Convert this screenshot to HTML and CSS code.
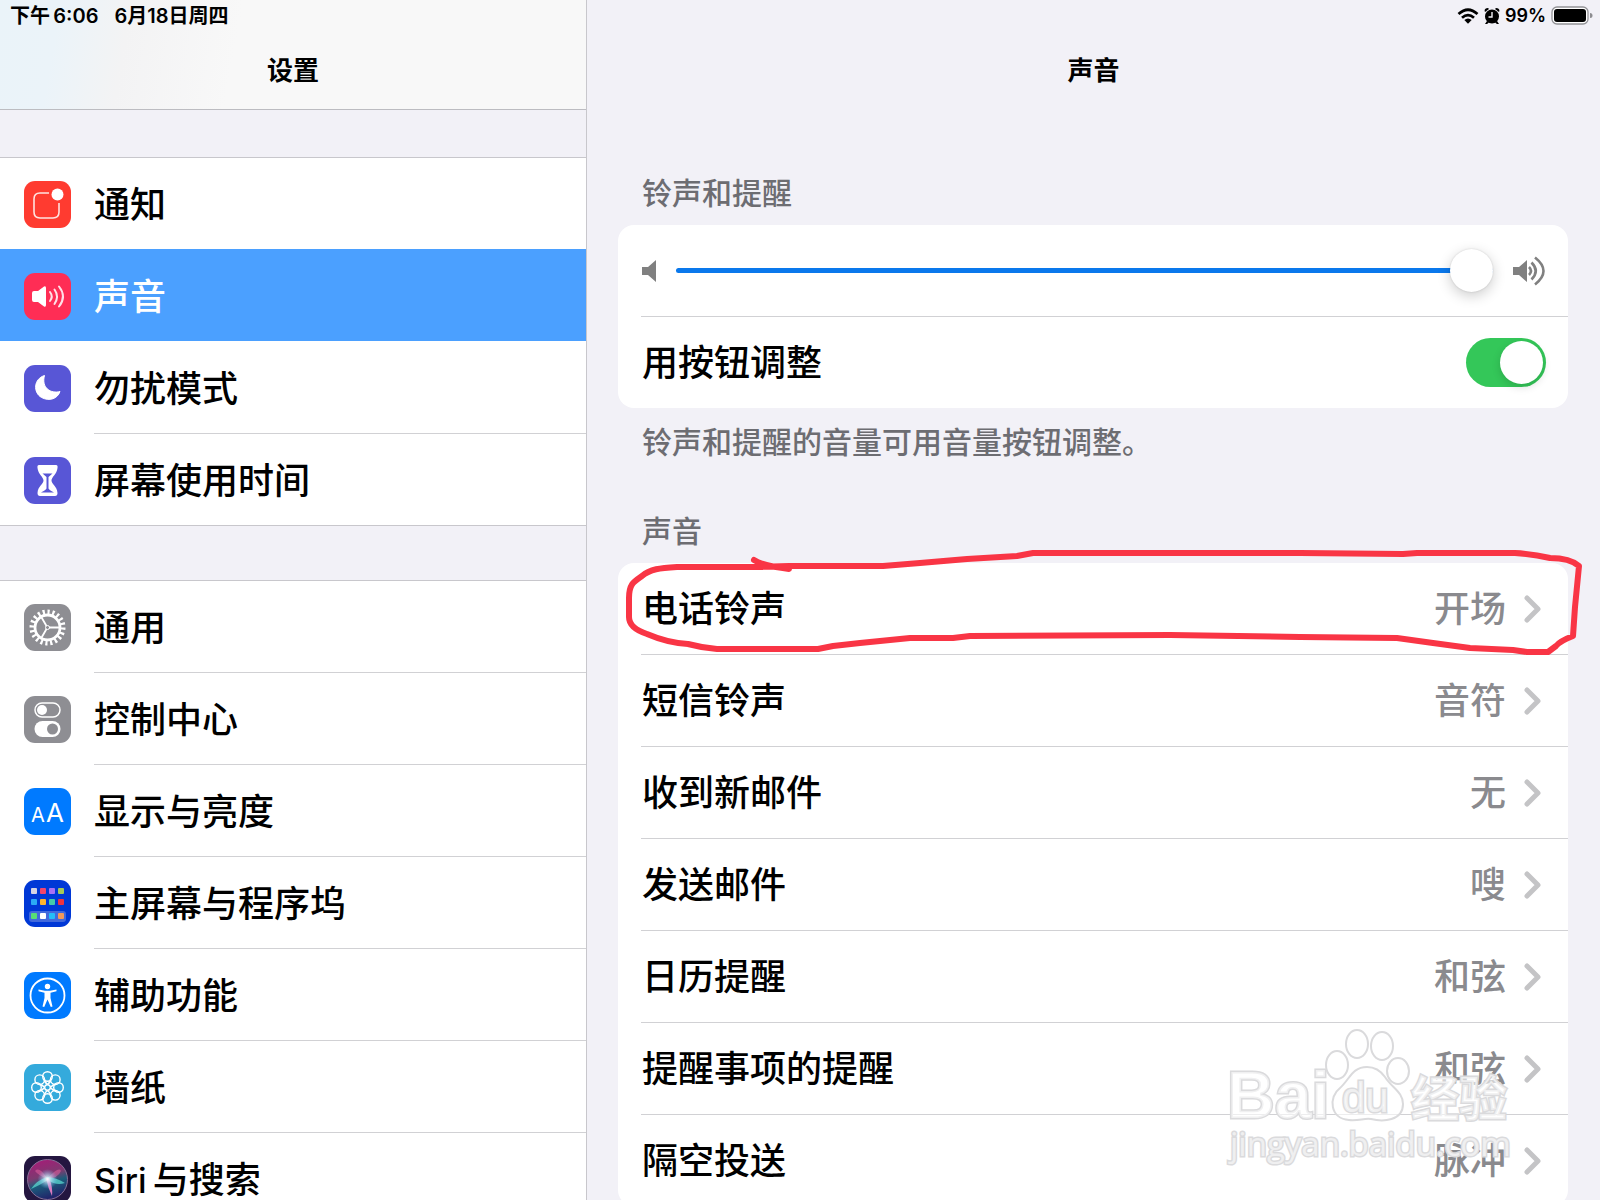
FILE: index.html
```html
<!DOCTYPE html>
<html lang="zh-CN">
  <head>
    <meta charset="UTF-8" />
    <meta name="viewport" content="width=device-width, initial-scale=1.0" />
    <title>设置 - 声音</title>
    <link rel="stylesheet" href="styles.css" />
  </head>
  <body>
    <div class="app">
      <aside class="sidebar">
        <header class="topbar topbar-left">
          <div class="status">
            <span>下午&thinsp;6:06</span>
            <span>6月18日周四</span>
          </div>
          <h1>设置</h1>
        </header>

        <nav class="menu">
          <div class="menu-group">
            <a href="#" class="item">
              <svg class="icon red" viewBox="0 0 47 47">
                <path d="M25 12H16Q10 12 10 18V31Q10 37 16 37H29Q35 37 35 31V22" fill="none" stroke="#ffe3e0" stroke-width="1.6" />
                <circle cx="33.5" cy="13.5" r="6" fill="#fff" />
              </svg>
              <span class="item-label">通知</span>
            </a>
            <a href="#" class="item active" aria-current="page">
              <svg class="icon pink" viewBox="0 0 47 47">
                <path d="M8 20Q8 18 10 18H14L20 13.500Q22 12.500 22 15V32Q22 34.500 20 33.500L14 29H10Q8 29 8 27Z" fill="#fff" />
                <path d="M26 19Q29.500 23.500 26 28M30.500 16.500Q35.500 23.500 30.500 31M35 13.500Q43 23.500 35 33.500" fill="none" stroke="#ffe0e7" stroke-width="2" stroke-linecap="round" />
              </svg>
              <span class="item-label">声音</span>
            </a>
            <a href="#" class="item">
              <svg class="icon purple" viewBox="0 0 47 47">
                <path d="M20.500 10.500C9.500 14 9 27.500 17.500 32.500C25 36.500 33.500 34 36 26.500C27 29 17 23 20.500 10.500Z" fill="#fff" stroke="#fff" stroke-linejoin="round" />
              </svg>
              <span class="item-label">勿扰模式</span>
            </a>
            <a href="#" class="item">
              <svg class="icon purple" viewBox="0 0 47 47">
                <path d="M15 8H32Q34 8 33.500 11C33 17 27.500 20 27.500 23.500C27.500 27 33 29 33.500 36Q33.500 39 31 39H16Q13.500 39 13.500 36C14 29 19.500 27 19.500 23.500C19.500 20 14 17 13.500 11Q13 8 15 8Z" fill="#fff" />
                <path d="M18.500 16.500H28.500L24.500 20V31.500Q25 33 30 35.500H17Q22 33 22.500 31.500V20Z" fill="#5856d6" />
              </svg>
              <span class="item-label">屏幕使用时间</span>
            </a>
          </div>

          <div class="menu-group">
            <a href="#" class="item">
              <svg class="icon gray" viewBox="0 0 47 47" fill="none" stroke="#fff">
                <circle cx="23.500" cy="23.500" r="12.500" stroke-width="2.800" />
                <circle cx="23.500" cy="23.500" r="15.500" pathLength="80" stroke-width="5" stroke-dasharray="1.800 2.200" />
                <circle cx="23.500" cy="23.500" r="2" stroke-width="1" />
                <path d="M25 23.500H36M22.500 22L17 12.500M22.500 25L17 34.500" stroke-width="1.800" />
              </svg>
              <span class="item-label">通用</span>
            </a>
            <a href="#" class="item">
              <svg class="icon gray" viewBox="0 0 47 47">
                <rect x="11" y="7" width="25" height="14" rx="7" fill="none" stroke="#fff" stroke-width="1.500" />
                <circle cx="18" cy="14" r="5" fill="#fff" />
                <rect x="10.500" y="25" width="26" height="16" rx="8" fill="#fff" />
                <circle cx="28.500" cy="33" r="5.500" fill="#8e8e93" />
              </svg>
              <span class="item-label">控制中心</span>
            </a>
            <a href="#" class="item">
              <svg class="icon blue" viewBox="0 0 47 47" fill="#fff" font-family="Inter, sans-serif" font-weight="400">
                <text x="7" y="34" font-size="20">A</text>
                <text x="22" y="34" font-size="26">A</text>
              </svg>
              <span class="item-label">显示与亮度</span>
            </a>
            <a href="#" class="item">
              <svg class="icon navy" viewBox="0 0 47 47">
                <rect x="5" y="31" width="37" height="11" rx="3" fill="#4169dc" />
                <rect x="7" y="8" width="6" height="6" rx="1" fill="#d5d5e3" />
                <rect x="16" y="8" width="6" height="6" rx="1" fill="#f2456d" />
                <rect x="25" y="8" width="6" height="6" rx="1" fill="#a970f5" />
                <rect x="34" y="8" width="6" height="6" rx="1" fill="#a4c958" />
                <rect x="7" y="19" width="6" height="6" rx="1" fill="#2babf5" />
                <rect x="16" y="19" width="6" height="6" rx="1" fill="#ffb42e" />
                <rect x="25" y="19" width="6" height="6" rx="1" fill="#44cba9" />
                <rect x="34" y="19" width="6" height="6" rx="1" fill="#ef3340" />
                <rect x="7" y="33" width="6" height="6" rx="1" fill="#57df76" />
                <rect x="16" y="33" width="6" height="6" rx="1" fill="#fff" />
                <rect x="25" y="33" width="6" height="6" rx="1" fill="#24bef8" />
                <rect x="34" y="33" width="6" height="6" rx="1" fill="#f29a5a" />
              </svg>
              <span class="item-label">主屏幕与程序坞</span>
            </a>
            <a href="#" class="item">
              <svg class="icon blue" viewBox="0 0 47 47">
                <circle cx="23.500" cy="23.500" r="17" fill="none" stroke="#fff" stroke-width="1.800" />
                <circle cx="23.500" cy="14.500" r="2.700" fill="#fff" />
                <path d="M14.500 17.500L21 18.700H26L32.500 17.500V19.300L26.500 20.800V26L28.500 34.500L26.800 35L23.500 27.500L20.200 35L18.500 34.500L20.500 26V20.800L14.500 19.300Z" fill="#fff" />
              </svg>
              <span class="item-label">辅助功能</span>
            </a>
            <a href="#" class="item">
              <svg class="icon cyan" viewBox="0 0 47 47" fill="none" stroke="#fff" stroke-width="1.400">
                <circle cx="23.500" cy="12.500" r="4.800" />
                <circle cx="31.300" cy="15.700" r="4.800" />
                <circle cx="34.500" cy="23.500" r="4.800" />
                <circle cx="31.300" cy="31.300" r="4.800" />
                <circle cx="23.500" cy="34.500" r="4.800" />
                <circle cx="15.700" cy="31.300" r="4.800" />
                <circle cx="12.500" cy="23.500" r="4.800" />
                <circle cx="15.700" cy="15.700" r="4.800" />
                <circle cx="23.500" cy="23.500" r="2.800" />
                <path d="M23.500 20.500Q20 18 20.500 15M23.500 20.500Q27 18 26.500 15M23.500 26.500Q20 29 20.500 32M23.500 26.500Q27 29 26.500 32M20.500 23.500Q18 20 15 20.500M20.500 23.500Q18 27 15 26.500M26.500 23.500Q29 20 32 20.500M26.500 23.500Q29 27 32 26.500" />
              </svg>
              <span class="item-label">墙纸</span>
            </a>
            <a href="#" class="item">
              <svg class="icon siri" viewBox="0 0 47 47">
                <defs>
                  <linearGradient id="orb" x1="0.300" y1="0" x2="0.600" y2="1">
                    <stop offset="0" stop-color="#a51c78" />
                    <stop offset="0.400" stop-color="#7d3a70" />
                    <stop offset="0.600" stop-color="#1b5d7b" />
                    <stop offset="1" stop-color="#221c68" />
                  </linearGradient>
                  <radialGradient id="glow">
                    <stop offset="0" stop-color="#fff" />
                    <stop offset="0.300" stop-color="#d5f2ff" stop-opacity="0.700" />
                    <stop offset="1" stop-color="#7cbcff" stop-opacity="0" />
                  </radialGradient>
                </defs>
                <circle cx="23.500" cy="23.500" r="20" fill="url(#orb)" stroke="#877198" />
                <path d="M23 22Q15 10 11 15Q14 19 23 23Q35 10 37 15Q34 22 24 23Z" fill="#e0609f" opacity="0.550" />
                <path d="M23 21Q13 24 7 33Q16 29 24 24Q32 30 41 27Q33 22 24 21Z" fill="#5ce0d4" opacity="0.700" />
                <path d="M22 22Q24 32 28 40Q29 31 25 22Z" fill="#ee82c9" opacity="0.900" />
                <circle cx="23.500" cy="23" r="10" fill="url(#glow)" />
              </svg>
              <span class="item-label"><span class="latin">Siri</span>与搜索</span>
            </a>
          </div>
        </nav>
      </aside>

      <main class="content">
        <header class="topbar">
          <div class="status status-right">
            <svg class="wifi" viewBox="0 0 22 16" fill="none" stroke="#000" stroke-width="2.800">
              <path d="M1.500 6Q11 -2.500 20.500 6M5 9.700Q11 4.500 17 9.700" />
              <path d="M7.300 12Q11 9 14.700 12L11 15.700Z" fill="#000" stroke="none" />
            </svg>
            <svg class="alarm" viewBox="0 0 16 18">
              <circle cx="8" cy="9.500" r="7" />
              <path d="M1 5Q-0.500 1.500 4 1L5 2ZM15 5Q16.500 1.500 12 1L11 2ZM3 14L1 17H3L5 15.500ZM13 14L15 17H13L11 15.500Z" />
              <path d="M8 5V10H4.500" fill="none" stroke="#f2f1f7" stroke-width="1.400" />
            </svg>
            <span class="percent">99%</span>
            <svg class="battery" viewBox="0 0 42 20">
              <rect x="1" y="1" width="36" height="17" rx="5" fill="#fff" stroke="#929296" stroke-width="1.300" />
              <rect x="3" y="3" width="32" height="13" rx="3" />
              <path d="M39 7Q41.500 7 41.500 9.500Q41.500 12 39 12Z" fill="#8d8d91" />
            </svg>
          </div>
          <h2>声音</h2>
        </header>

        <section class="section">
          <h3>铃声和提醒</h3>
          <div class="card">
            <div class="row">
              <svg class="speaker-low" viewBox="0 0 14 22" fill="#808080">
                <path d="M0 7H6L14 0V22L6 15H0Z" />
              </svg>
              <input type="range" class="volume" min="0" max="100" value="100" aria-label="铃声和提醒音量" />
              <svg class="speaker-high" viewBox="0 0 33 30" fill="#808080">
                <path d="M0 11H6L14 4V26L6 19H0Z" />
                <path d="M16 11Q20 15 16 19M18.500 6.500Q27 15 18.500 23.500M22 1.500Q39 15 22 28.500" fill="none" stroke="#808080" stroke-width="2.600" />
              </svg>
            </div>
            <div class="row">
              <label class="row-label" for="useButtons">用按钮调整</label>
              <input type="checkbox" class="switch" id="useButtons" checked />
            </div>
          </div>
          <p>铃声和提醒的音量可用音量按钮调整。</p>
        </section>

        <section class="section">
          <h3>声音</h3>
          <div class="card">
            <a href="#" class="row link">
              <span class="row-label">电话铃声</span>
              <span class="value">开场</span>
              <svg class="chevron" viewBox="0 0 18 28"><path d="M3 3L14 14L3 25" /></svg>
              <svg class="marker" viewBox="620 545 970 115" preserveAspectRatio="none">
                <path d="M754 560Q763 566 789 569M789 566H883L920 563L967 559L1017 556L1033 553H1300L1403 554L1417 553H1515Q1533 554 1550 558Q1570 558 1579 566L1575 607L1573 636Q1560 641 1556 646L1548 652H1527L1513 650L1470 648L1433 643L1397 638L1300 637L1170 635L970 636L953 638H910L860 643L833 646L818 649H717Q703 648 688 644Q668 643 647 634Q629 628 629 617V598C629 583 635 581 642 576C650 569 660 568 677 567H753L789 566" />
              </svg>
            </a>
            <a href="#" class="row link">
              <span class="row-label">短信铃声</span>
              <span class="value">音符</span>
              <svg class="chevron" viewBox="0 0 18 28"><path d="M3 3L14 14L3 25" /></svg>
            </a>
            <a href="#" class="row link">
              <span class="row-label">收到新邮件</span>
              <span class="value">无</span>
              <svg class="chevron" viewBox="0 0 18 28"><path d="M3 3L14 14L3 25" /></svg>
            </a>
            <a href="#" class="row link">
              <span class="row-label">发送邮件</span>
              <span class="value">嗖</span>
              <svg class="chevron" viewBox="0 0 18 28"><path d="M3 3L14 14L3 25" /></svg>
            </a>
            <a href="#" class="row link">
              <span class="row-label">日历提醒</span>
              <span class="value">和弦</span>
              <svg class="chevron" viewBox="0 0 18 28"><path d="M3 3L14 14L3 25" /></svg>
            </a>
            <a href="#" class="row link">
              <span class="row-label">提醒事项的提醒</span>
              <span class="value">和弦</span>
              <svg class="chevron" viewBox="0 0 18 28"><path d="M3 3L14 14L3 25" /></svg>
            </a>
            <a href="#" class="row link">
              <span class="row-label">隔空投送</span>
              <span class="value">脉冲</span>
              <svg class="chevron" viewBox="0 0 18 28"><path d="M3 3L14 14L3 25" /></svg>
            </a>
          </div>
        </section>
      </main>

      <svg class="watermark" viewBox="0 0 300 150">
        <text class="wm-bai" x="2" y="93">Bai</text>
        <g>
          <ellipse cx="112" cy="40" rx="11" ry="14" />
          <ellipse cx="132" cy="19" rx="11" ry="14" />
          <ellipse cx="157" cy="21" rx="11" ry="14" />
          <ellipse cx="173" cy="46" rx="11" ry="13" />
          <path d="M142 42C127 42 125 54 115 63C103 72 105 94 124 95C134 96 139 93 146 94C158 97 178 96 178 79C178 67 167 63 160 52Q153 42 142 42Z" />
        </g>
        <text class="wm-du" x="117" y="87">du</text>
        <text class="wm-cn" x="186" y="91">经验</text>
        <text class="wm-url" x="5" y="131">jingyan.baidu.com</text>
      </svg>
    </div>
  </body>
</html>
```
FILE: styles.css
```css
* {
  box-sizing: border-box;
}
body {
  margin: 0;
  font-family: Inter, "Noto Sans CJK SC", sans-serif;
  font-weight: 500;
  color: #000;
  background: #f2f1f7;
}
a {
  color: inherit;
  text-decoration: none;
}
h1,
h2,
h3,
p {
  margin: 0;
}
.app {
  position: relative;
  display: grid;
  grid-template-columns: 587px 1fr;
  height: 100vh;
  overflow: hidden;
}
.sidebar {
  border-right: 1px solid #c8c7cc;
  overflow: hidden;
}
.content {
  overflow: hidden;
}

/* top bars */
.topbar {
  height: 110px;
}
.topbar-left {
  border-bottom: 1px solid #bcbcc1;
  background: linear-gradient(100deg, #eaf3f9 0, #ebf3f9 60px, #f3f3f4 130px, #f8f8f8 240px);
}
.status {
  display: flex;
  align-items: center;
  gap: 16px;
  height: 32px;
  padding: 0 10px;
  font-size: 20px;
  font-weight: 600;
  line-height: 32px;
}
.status-right {
  justify-content: flex-end;
  gap: 5px;
  padding-right: 7px;
}
.percent {
  font-size: 18px;
}
.wifi {
  width: 22px;
  height: 16px;
}
.alarm {
  width: 16px;
  height: 18px;
}
.battery {
  width: 42px;
  height: 20px;
}
h1,
h2 {
  padding-top: 20px;
  font-size: 26px;
  font-weight: 700;
  line-height: 38px;
  text-align: center;
}

/* sidebar */
.menu {
  display: flex;
  flex-direction: column;
  gap: 54px;
  padding-top: 47px;
}
.menu-group {
  border-bottom: 1px solid #c8c7cc;
  background: #fff;
}
.item {
  display: flex;
  align-items: center;
  gap: 23px;
  padding-left: 24px;
  font-size: 36px;
  line-height: 52px;
}
.item-label {
  flex: 1;
  padding: 21px 0 18px;
  border-top: 1px solid #d1d1d4;
}
.item:first-child {
  border-top: 1px solid #c8c7cc;
}
.item:first-child .item-label {
  border-top: none;
}
.item.active {
  color: #fff;
  background: #4ba0ff;
}
.item.active .item-label,
.item.active + .item .item-label {
  border-color: transparent;
}
.latin {
  margin-right: 6px;
  font-size: 34px;
}
.icon {
  width: 47px;
  height: 47px;
  margin-top: 2px;
  border-radius: 11px;
}
.red {
  background: #ff3b30;
}
.pink {
  background: #ff2d55;
}
.purple {
  background: #5856d6;
}
.gray {
  background: #8e8e93;
}
.blue {
  background: #007aff;
}
.navy {
  background: #0038d6;
}
.cyan {
  background: #34aadc;
}
.siri {
  background: #241640;
}

/* content */
.section {
  padding: 63px 32px 0 31px;
}
.section + .section {
  padding-top: 49px;
}
.section h3,
.section p {
  padding-left: 24px;
  font-size: 30px;
  line-height: 40px;
  font-weight: 500;
  color: #6d6d72;
}
.section h3 {
  margin-bottom: 12px;
}
.section p {
  margin-top: 14px;
}
.card {
  border-radius: 16px;
  background: #fff;
}
.row {
  position: relative;
  display: flex;
  align-items: center;
  min-height: 92px;
  margin-left: 23px;
  padding: 0 22px 0 1px;
  font-size: 36px;
  line-height: 52px;
}
.row:first-child {
  min-height: 91px;
}
.row + .row {
  border-top: 1px solid #d1d1d4;
}
.row-label {
  flex: 1;
}
.link {
  padding-right: 26px;
}
.value {
  color: #8a8a8e;
}
.chevron {
  width: 18px;
  height: 28px;
  margin-left: 18px;
  fill: none;
  stroke: #c4c4c6;
  stroke-width: 5;
  stroke-linecap: round;
  stroke-linejoin: round;
}

/* volume slider */
.speaker-low {
  width: 14px;
  height: 22px;
}
.speaker-high {
  width: 33px;
  height: 30px;
}
.volume {
  flex: 1;
  height: 43px;
  margin: 0 20px;
  background: none;
  appearance: none;
}
.volume::-webkit-slider-runnable-track {
  height: 5px;
  border-radius: 3px;
  background: #0a78ec;
}
.volume::-webkit-slider-thumb {
  width: 43px;
  height: 43px;
  margin-top: -19px;
  border-radius: 50%;
  background: #fff;
  box-shadow: 0 4px 14px rgba(0, 0, 0, 0.2), 0 0 2px rgba(0, 0, 0, 0.15);
  appearance: none;
}

/* switch */
.switch {
  width: 80px;
  height: 49px;
  margin: 0;
  padding: 3px;
  border-radius: 25px;
  background: #c8c7cc;
  appearance: none;
}
.switch::before {
  content: "";
  display: block;
  width: 43px;
  height: 43px;
  border-radius: 50%;
  background: #fff;
  box-shadow: 0 3px 8px rgba(0, 0, 0, 0.15);
}
.switch:checked {
  background: #34c759;
}
.switch:checked::before {
  margin-left: auto;
}

/* hand drawn circle round the first row */
.marker {
  position: absolute;
  top: -18px;
  left: -21px;
  width: calc(100% + 43px);
  height: 115px;
  fill: none;
  stroke: #f93545;
  stroke-width: 6;
  stroke-linecap: round;
  stroke-linejoin: round;
  pointer-events: none;
  z-index: 1;
}

.watermark {
  position: absolute;
  right: 75px;
  bottom: 25px;
  width: 300px;
  height: 150px;
  fill: rgba(255, 255, 255, 0.6);
  stroke: #dadadc;
  stroke-width: 2;
  pointer-events: none;
}
.watermark text {
  paint-order: stroke;
  stroke-width: 3;
}
.wm-bai {
  font: 700 66px "Liberation Sans", sans-serif;
}
.wm-du {
  font: 400 42px "Liberation Sans", sans-serif;
}
.wm-cn {
  font: 700 48px "Noto Sans CJK SC", sans-serif;
}
.wm-url {
  font: 400 33px "Open Sans", sans-serif;
}
```
